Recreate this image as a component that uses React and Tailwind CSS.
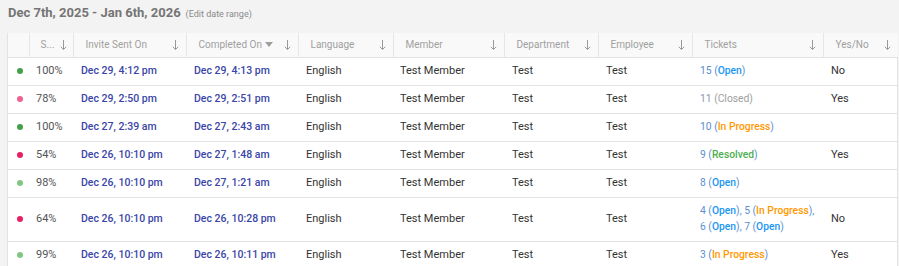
import React from 'react';

const cols = [
    { key: 'dot', label: '', w: 'w-[21px]' },
    { key: 's', label: 'S...', w: 'w-[44px]' },
    { key: 'invite', label: 'Invite Sent On', w: 'w-[113px]' },
    { key: 'completed', label: 'Completed On', w: 'w-[112px]', sorted: true },
    { key: 'lang', label: 'Language', w: 'w-[95px]' },
    { key: 'member', label: 'Member', w: 'w-[111px]' },
    { key: 'dept', label: 'Department', w: 'w-[94px]' },
    { key: 'emp', label: 'Employee', w: 'w-[94px]' },
    { key: 'tickets', label: 'Tickets', w: 'w-[131px]' },
    { key: 'yn', label: 'Yes/No', w: 'w-[75px]' },
];

const statusColor = {
    Open: 'text-[#2196f3]',
    Closed: 'text-[#9e9e9e]',
    'In Progress': 'text-[#ff9800]',
    Resolved: 'text-[#4caf50]',
};

const rows = [
    { dot: 'bg-[#43a047]', pct: '100%', invite: 'Dec 29, 4:12 pm', done: 'Dec 29, 4:13 pm', tickets: [[15, 'Open']], yn: 'No' },
    { dot: 'bg-[#f06292]', pct: '78%', invite: 'Dec 29, 2:50 pm', done: 'Dec 29, 2:51 pm', tickets: [[11, 'Closed']], yn: 'Yes' },
    { dot: 'bg-[#43a047]', pct: '100%', invite: 'Dec 27, 2:39 am', done: 'Dec 27, 2:43 am', tickets: [[10, 'In Progress']], yn: '' },
    { dot: 'bg-[#e91e63]', pct: '54%', invite: 'Dec 26, 10:10 pm', done: 'Dec 27, 1:48 am', tickets: [[9, 'Resolved']], yn: 'Yes' },
    { dot: 'bg-[#81c784]', pct: '98%', invite: 'Dec 26, 10:10 pm', done: 'Dec 27, 1:21 am', tickets: [[8, 'Open']], yn: '' },
    { dot: 'bg-[#e91e63]', pct: '64%', invite: 'Dec 26, 10:10 pm', done: 'Dec 26, 10:28 pm', tickets: [[4, 'Open'], [5, 'In Progress'], [6, 'Open'], [7, 'Open']], yn: 'No', tall: true },
    { dot: 'bg-[#81c784]', pct: '99%', invite: 'Dec 26, 10:10 pm', done: 'Dec 26, 10:11 pm', tickets: [[3, 'In Progress']], yn: 'Yes' },
];

function Ticket({ n, status }) {
    const grey = status === 'Closed';
    return (
        <span className={grey ? 'text-[#8a9bb0]' : 'text-[#5b8fd0]'}>
            {n} <span className={grey ? 'text-[#9e9e9e]' : ''}>(</span>
            <span className={`${statusColor[status]} ${grey ? '' : 'font-medium'}`}>{status}</span>
            <span className={grey ? 'text-[#9e9e9e]' : ''}>)</span>
        </span>
    );
}

function Tickets({ list }) {
    return (
        <span className="leading-4 text-[10.3px]">
            {list.map(([n, s], i) => (
                <React.Fragment key={i}>
                    <Ticket n={n} status={s} />
                    {i < list.length - 1 && <span className="text-[#5b8fd0]">, </span>}
                    {i === 1 && list.length > 2 && <br />}
                </React.Fragment>
            ))}
        </span>
    );
}

export default function App() {
    return (
        <div className="w-[899px] h-[266px] overflow-hidden bg-[#f3f3f3] font-['Roboto',sans-serif]">
            <div className="flex items-baseline gap-[5px] pl-2 pt-[3px] h-[33px]">
                <span className="text-[13px] font-bold text-[#757575]">Dec 7th, 2025 - Jan 6th, 2026</span>
                <span className="text-[9px] text-[#8a8a8a]">(Edit date range)</span>
            </div>
            <div className="ml-[7px] w-[891px] bg-white border-x border-[#e3e3e3]">
                <table className="table-fixed border-collapse w-[890px] text-[11px]">
                    <colgroup>
                        {cols.map((c) => (
                            <col key={c.key} className={c.w} />
                        ))}
                    </colgroup>
                    <thead>
                        <tr className="h-[24px] bg-[#f9f9f9] border-b border-[#e3e3e3]">
                            {cols.map((c, i) => (
                                <th
                                    key={c.key}
                                    className={`p-0 font-normal text-left text-[10px] text-[#a0a0a0] ${i < cols.length - 1 ? 'border-r border-[#e6e6e6]' : ''}`}
                                >
                                    {c.label && (
                                        <div className={`flex items-center justify-between ${c.key === 's' ? 'pl-[11px] pr-[5px]' : 'pl-[12px] pr-[6px]'}`}>
                                            <span className="flex items-center gap-[3px] whitespace-nowrap">
                                                {c.label}
                                                {c.sorted && (
                                                    <svg width="8" height="5" viewBox="0 0 8 5">
                                                        <path d="M0 0h8L4 5z" fill="#9e9e9e" />
                                                    </svg>
                                                )}
                                            </span>
                                            <svg width="9" height="12" viewBox="0 0 9 12" className="shrink-0">
                                                <path d="M4.5 1v9.5M1.8 7.8l2.7 2.7 2.7-2.7" stroke="#999" strokeWidth="1" fill="none" />
                                            </svg>
                                        </div>
                                    )}
                                </th>
                            ))}
                        </tr>
                    </thead>
                    <tbody>
                        {rows.map((r, i) => (
                            <tr key={i} className={`${r.tall ? 'h-[44px]' : 'h-[28px]'} border-b border-[#e3e3e3] text-[#333]`}>
                                <td className="p-0">
                                    <div className="flex justify-center pl-[3px]">
                                        <span className={`w-[6px] h-[6px] rounded-full ${r.dot}`} />
                                    </div>
                                </td>
                                <td className="p-0 pl-[7px] text-[#555]">{r.pct}</td>
                                <td className="p-0 pl-[8px] text-[10.5px] font-medium text-[#3a45a8]">{r.invite}</td>
                                <td className="p-0 pl-[8px] text-[10.5px] font-medium text-[#3a45a8]">{r.done}</td>
                                <td className="p-0 pl-[8px]">English</td>
                                <td className="p-0 pl-[7px]">Test Member</td>
                                <td className="p-0 pl-[8px]">Test</td>
                                <td className="p-0 pl-[8px]">Test</td>
                                <td className="p-0 pl-[8px]">
                                    <Tickets list={r.tickets} />
                                </td>
                                <td className="p-0 pl-[8px]">{r.yn}</td>
                            </tr>
                        ))}
                    </tbody>
                </table>
            </div>
        </div>
    );
}
